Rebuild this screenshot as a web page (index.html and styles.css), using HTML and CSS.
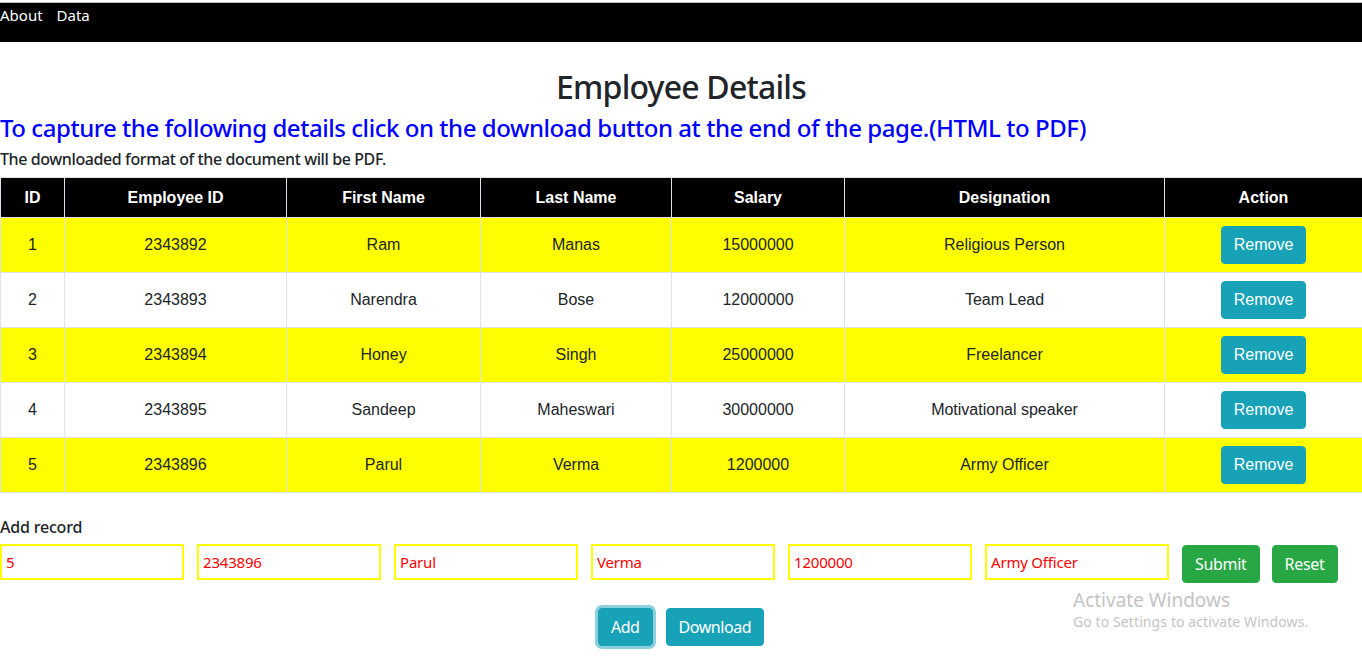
FILE: index.html
```html
<!DOCTYPE html>
<html>
<head>
<meta charset="utf-8">
<title>Employee Details</title>
<link rel="stylesheet" href="styles.css">
</head>
<body>
<nav class="navbar">
  <a class="nav-link" href="#">About</a>
  <a class="nav-link" href="#">Data</a>
</nav>
<main class="content">
  <h2 class="title">Employee Details</h2>
  <h4 class="note">To capture the following details click on the download button at the end of the page.(HTML to PDF)</h4>
  <p class="sub">The downloaded format of the document will be PDF.</p>
  <table class="emp-table">
    <colgroup>
      <col class="c-id"><col class="c-eid"><col class="c-fn"><col class="c-ln"><col class="c-sal"><col class="c-des"><col class="c-act">
    </colgroup>
    <thead>
      <tr><th>ID</th><th>Employee ID</th><th>First Name</th><th>Last Name</th><th>Salary</th><th>Designation</th><th>Action</th></tr>
    </thead>
    <tbody>
      <tr class="odd"><td>1</td><td>2343892</td><td>Ram</td><td>Manas</td><td>15000000</td><td>Religious Person</td><td><button class="btn btn-info">Remove</button></td></tr>
      <tr><td>2</td><td>2343893</td><td>Narendra</td><td>Bose</td><td>12000000</td><td>Team Lead</td><td><button class="btn btn-info">Remove</button></td></tr>
      <tr class="odd"><td>3</td><td>2343894</td><td>Honey</td><td>Singh</td><td>25000000</td><td>Freelancer</td><td><button class="btn btn-info">Remove</button></td></tr>
      <tr><td>4</td><td>2343895</td><td>Sandeep</td><td>Maheswari</td><td>30000000</td><td>Motivational speaker</td><td><button class="btn btn-info">Remove</button></td></tr>
      <tr class="odd"><td>5</td><td>2343896</td><td>Parul</td><td>Verma</td><td>1200000</td><td>Army Officer</td><td><button class="btn btn-info">Remove</button></td></tr>
    </tbody>
  </table>
  <section class="add">
    <h6 class="add-title">Add record</h6>
    <form class="add-form">
      <input class="field" type="text" value="5">
      <input class="field" type="text" value="2343896">
      <input class="field" type="text" value="Parul">
      <input class="field" type="text" value="Verma">
      <input class="field" type="text" value="1200000">
      <input class="field" type="text" value="Army Officer">
      <button type="button" class="btn btn-success">Submit</button>
      <button type="button" class="btn btn-success btn-reset">Reset</button>
    </form>
    <div class="actions">
      <button class="btn btn-info btn-focus">Add</button>
      <button class="btn btn-info">Download</button>
    </div>
  </section>
</main>
<div class="watermark">
  <div class="wm-1">Activate Windows</div>
  <div class="wm-2">Go to Settings to activate Windows.</div>
</div>
</body>
</html>
```
FILE: styles.css
```css
html, body {
  margin: 0;
  padding: 0;
}
body {
  font-family: "Noto Sans", "Open Sans", sans-serif;
  font-size: 15px;
  color: #212529;
  background: #fff;
  width: 1362px;
  height: 661px;
  overflow: hidden;
}
.navbar {
  margin-top: 2px;
  border-top: 1px solid #bdbdbd;
  background: #000;
  height: 39px;
  display: flex;
  gap: 14px;
  align-items: flex-start;
}
.nav-link {
  color: #fff;
  text-decoration: none;
  font-size: 15px;
  line-height: 25px;
}
.content {
  display: flex;
  flex-direction: column;
}
.title {
  margin: 26px 0 0;
  text-align: center;
  font-size: 32px;
  font-weight: 500;
  line-height: 38px;
  letter-spacing: -0.8px;
  color: #212529;
}
.note {
  margin: 7px 0 0;
  font-size: 24px;
  font-weight: 500;
  line-height: 29px;
  letter-spacing: -0.45px;
  color: #0000ff;
}
.sub {
  margin: 7px 0 0;
  font-size: 16px;
  font-weight: 500;
  line-height: 20px;
  letter-spacing: -0.4px;
}
.emp-table {
  margin-top: 8px;
  width: 1362px;
  border-collapse: collapse;
  table-layout: fixed;
  font-family: "Liberation Sans", Arial, sans-serif;
  font-size: 16px;
  color: #212529;
}
.c-id { width: 64px; }
.c-eid { width: 222px; }
.c-fn { width: 194px; }
.c-ln { width: 191px; }
.c-sal { width: 173px; }
.c-des { width: 320px; }
.c-act { width: 198px; }
.emp-table th,
.emp-table td {
  border: 1px solid #dee2e6;
  text-align: center;
  vertical-align: middle;
  padding: 0;
}
.emp-table th {
  background: #000;
  color: #fff;
  font-weight: bold;
  height: 39px;
}
.emp-table td {
  height: 54px;
}
.emp-table tr.odd td {
  background: #ffff00;
}
.btn {
  font-family: "Noto Sans", "Open Sans", sans-serif;
  font-size: 16px;
  line-height: 24px;
  letter-spacing: -0.3px;
  padding: 6px 12px;
  border: 1px solid transparent;
  border-radius: 4px;
  color: #fff;
  cursor: pointer;
}
.btn-info {
  background: #17a2b8;
  border-color: #17a2b8;
}
.emp-table .btn-info {
  font-family: "Liberation Sans", Arial, sans-serif;
  letter-spacing: 0;
}
.btn-success {
  background: #28a745;
  border-color: #28a745;
}
.add {
  display: flex;
  flex-direction: column;
}
.add-title {
  margin: 24px 0 0;
  font-size: 16px;
  font-weight: 500;
  line-height: 20px;
  letter-spacing: -0.2px;
}
.add-form {
  margin: 7px 0 0;
  display: flex;
  align-items: flex-start;
  gap: 13px;
}
.field {
  box-sizing: border-box;
  width: 184px;
  height: 36px;
  border: 2px solid #ffff00;
  padding: 0 4px;
  font-family: "Noto Sans", "Open Sans", sans-serif;
  font-size: 15px;
  letter-spacing: -0.2px;
  color: #ff0000;
  outline: none;
  margin: 0;
}
.add-form .btn-success {
  margin-top: 1px;
}
.add-form .btn-reset {
  margin-left: -1px;
}
.actions {
  margin-top: 25px;
  display: flex;
  justify-content: center;
  gap: 13px;
}
.actions .btn {
  letter-spacing: -0.45px;
}
.btn-focus {
  box-shadow: 0 0 0 3px rgba(23, 162, 184, 0.5);
}
.watermark {
  position: absolute;
  left: 1073px;
  top: 588px;
  color: #c4c4c4;
  font-family: "Noto Sans", "Open Sans", sans-serif;
}
.wm-1 {
  font-size: 19px;
  line-height: 25px;
}
.wm-2 {
  font-size: 14px;
  line-height: 18px;
  letter-spacing: 0.1px;
}
```
